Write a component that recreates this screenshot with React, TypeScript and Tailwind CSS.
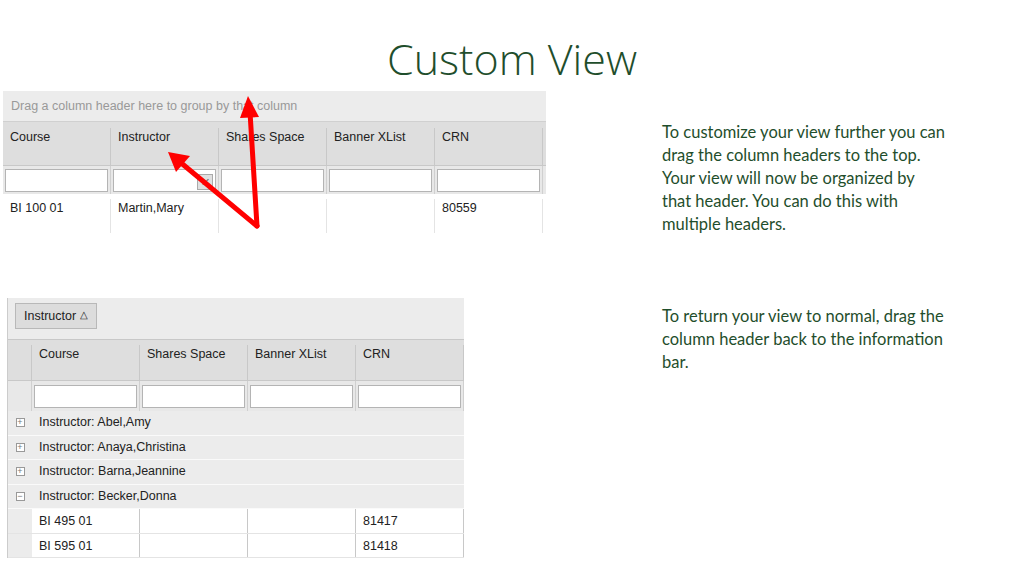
const green = "text-[#1f4e2c]";

function Cell({ w, children, cls = "" }: { w: string; children?: React.ReactNode; cls?: string }) {
  return <div className={`${w} shrink-0 border-r border-[#c8c8c8] px-[7px] ${cls}`}>{children}</div>;
}

function FilterCell({ w, x = false }: { w: string; x?: boolean }) {
  return (
    <div className={`${w} shrink-0 border-r border-[#d0d0d0] p-[2px] flex items-center`}>
      <div className="relative w-full h-[23px] bg-white border border-[#b4b4b4]">
        {x && <div className="absolute right-[2px] bottom-[1px] w-[16px] h-[16px] bg-[#e0e0e0] border border-[#aaa] text-[11px] leading-[14px] text-center text-[#777]">✕</div>}
      </div>
    </div>
  );
}

const PlusBox = ({ minus }: { minus?: boolean }) => (
  <div className="w-[9px] h-[9px] border border-[#999] text-[9px] leading-[7px] text-center text-[#777] bg-white">{minus ? "−" : "+"}</div>
);

export default function App() {
  const topCols = ["Course", "Instructor", "Shares Space", "Banner XList", "CRN"];
  const botCols = ["Course", "Shares Space", "Banner XList", "CRN"];
  const groups = ["Abel,Amy", "Anaya,Christina", "Barna,Jeannine", "Becker,Donna"];
  return (
    <div className="relative w-[1024px] h-[576px] bg-white overflow-hidden" style={{ fontFamily: "'Liberation Sans', sans-serif" }}>
      <h1 className={`text-center pt-[33px] h-[91px] text-[43px] leading-[52px] ${green}`} style={{ fontFamily: "'Open Sans', sans-serif", fontWeight: 300 }}>
        Custom View
      </h1>
      <div className="flex">
        <div className="w-[662px] shrink-0">
          {/* top grid */}
          <div className="ml-[3px] w-[543px] text-[12.5px] text-[#222]">
            <div className="h-[31px] bg-[#ececec] border-b border-[#d0d0d0] pl-[8px] leading-[30px] text-[#999]">Drag a column header here to group by that column</div>
            <div className="flex h-[44px] bg-[#dedede] border-b border-[#c8c8c8] pt-[6px]">
              {topCols.map((c) => <Cell key={c} w="w-[108px]">{c}</Cell>)}
            </div>
            <div className="flex h-[28px] bg-[#e8e8e8]">
              {topCols.map((c, i) => <FilterCell key={c} w="w-[108px]" x={i === 1} />)}
            </div>
            <div className="flex h-[39px] pt-[5px]">
              {["BI 100 01", "Martin,Mary", "", "", "80559"].map((c, i) => <Cell key={i} w="w-[108px]" cls="border-[#e4e4e4]">{c}</Cell>)}
            </div>
          </div>

          {/* bottom grid */}
          <div className="ml-[7px] mt-[65px] w-[457px] text-[12.5px] text-[#222] border-l border-[#ccc]">
            <div className="h-[41px] bg-[#ececec] pt-[5px] pl-[7px]">
              <div className="inline-flex items-center h-[26px] px-[8px] bg-[#dcdcdc] border border-[#b8b8b8]">Instructor <span className="ml-[4px] text-[10px] -mt-[4px]">△</span></div>
            </div>
            <div className="flex h-[42px] bg-[#dedede] border-y border-[#c8c8c8] pt-[5px]">
              <Cell w="w-[24px]" />
              {botCols.map((c) => <Cell key={c} w="w-[108px]">{c}</Cell>)}
            </div>
            <div className="flex h-[30px] bg-[#e8e8e8]">
              <div className="w-[24px] shrink-0 border-r border-[#d0d0d0]" />
              {botCols.map((c) => <FilterCell key={c} w="w-[108px]" />)}
            </div>
            {groups.map((g, i) => (
              <div key={g} className="flex items-center h-[24.5px] bg-[#ececec] border-b border-[#fafafa]">
                <div className="w-[24px] flex justify-center"><PlusBox minus={i === 3} /></div>
                <span className="pl-[7px]">Instructor: {g}</span>
              </div>
            ))}
            {[["BI 495 01", "81417"], ["BI 595 01", "81418"]].map(([a, b]) => (
              <div key={a} className="flex h-[24.5px] items-center border-b border-[#e4e4e4]">
                <div className="w-[24px] h-full shrink-0 bg-[#ececec]" />
                <Cell w="w-[108px] h-full leading-[24px]">{a}</Cell>
                <Cell w="w-[108px] h-full" />
                <Cell w="w-[108px] h-full" />
                <Cell w="w-[108px] h-full leading-[24px]">{b}</Cell>
              </div>
            ))}
          </div>
        </div>

        <div className={`pt-[30px] w-[284px] text-[16.5px] leading-[23px] ${green}`} style={{ fontFamily: "Lato, sans-serif" }}>
          <p>To customize your view further you can drag the column headers to the top. Your view will now be organized by that header. You can do this with multiple headers.</p>
          <p className="mt-[69px]">To return your view to normal, drag the column header back to the information bar.</p>
        </div>
      </div>

      {/* red arrows overlay */}
      <svg className="absolute left-0 top-0 pointer-events-none" width="1024" height="576">
        <g stroke="#f00" strokeWidth="5" fill="none" strokeLinecap="round">
          <line x1="257" y1="226" x2="250" y2="112" />
          <line x1="257" y1="226" x2="180" y2="162" />
        </g>
        <polygon points="248,96 240,118 259,117" fill="#f00" />
        <polygon points="168,152 176,172 190,156" fill="#f00" />
      </svg>
    </div>
  );
}
